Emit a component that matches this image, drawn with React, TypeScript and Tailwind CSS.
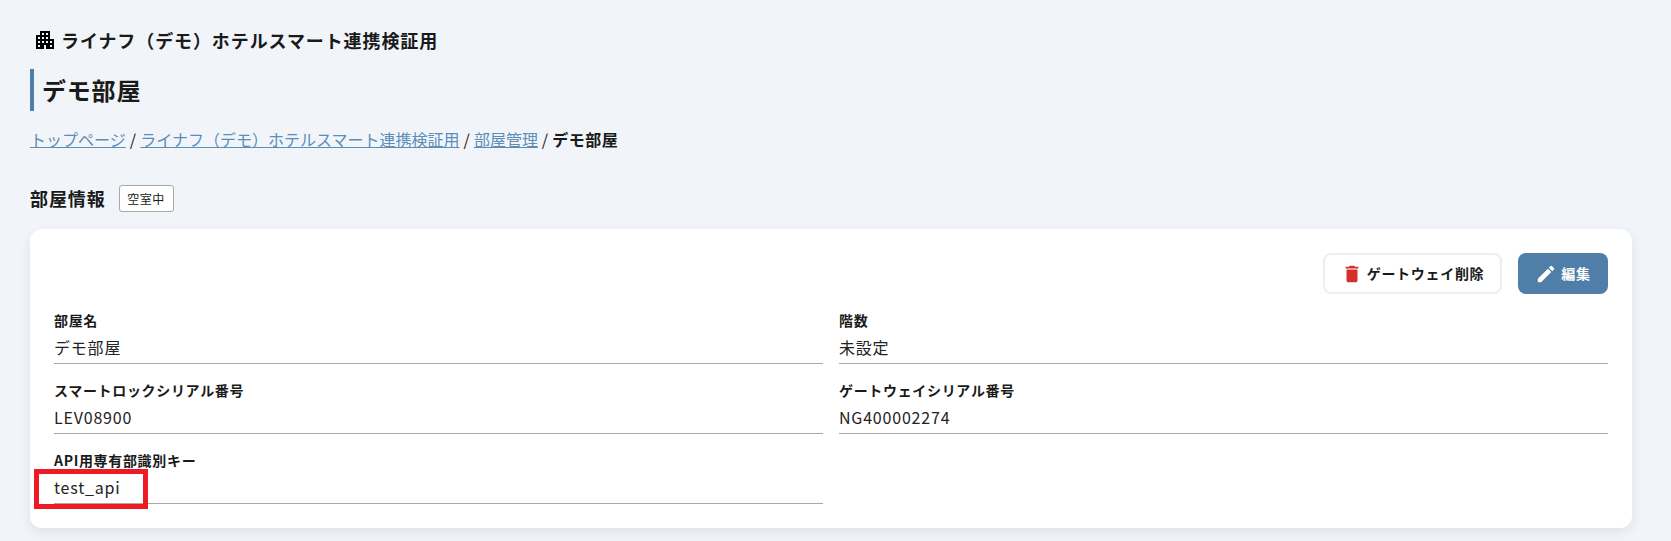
import { MdApartment, MdDelete, MdEdit } from 'react-icons/md';

const fields = [
    { label: '部屋名', value: 'デモ部屋' },
    { label: '階数', value: '未設定' },
    { label: 'スマートロックシリアル番号', value: 'LEV08900' },
    { label: 'ゲートウェイシリアル番号', value: 'NG400002274' },
    { label: 'API用専有部識別キー', value: 'test_api' },
];

export default function App() {
    return (
        <div className="relative min-h-[541px] bg-[#f1f5f9] px-[30px] pt-[28px] text-[#1a1a1a] font-['Noto_Sans_CJK_JP','Noto_Sans',sans-serif] overflow-hidden">
            <div className="flex items-center h-[24px] pl-[3px] gap-[4px] text-[18px] leading-[24px] font-bold tracking-[0.9px]">
                <MdApartment size={24} className="text-black" />
                <span>ライナフ（デモ）ホテルスマート連携検証用</span>
            </div>

            <h1 className="mt-[17px] h-[42px] flex items-center border-l-[4px] border-[#4f7ea8] pl-[8px] text-[24px] font-bold tracking-[0.8px]">
                デモ部屋
            </h1>

            <nav className="mt-[16px] text-[16px] leading-[24px]">
                <a className="text-[#5b8db8] underline">トップページ</a>
                <span className="tracking-[0.4px]"> / </span>
                <a className="text-[#5b8db8] underline">ライナフ（デモ）ホテルスマート連携検証用</a>
                <span className="tracking-[0.3px]"> / </span>
                <a className="text-[#5b8db8] underline">部屋管理</a>
                <span className="tracking-[0.3px]"> / </span>
                <span className="font-bold tracking-[0.5px]">デモ部屋</span>
            </nav>

            <div className="mt-[34px] flex items-center h-[27px] gap-[13px]">
                <h2 className="text-[18px] font-bold tracking-[0.9px]">部屋情報</h2>
                <span className="h-[27px] w-[55px] flex items-center justify-center bg-white border border-[#a8a8a8] rounded-[3px] text-[12px] tracking-[0.5px]">空室中</span>
            </div>

            <div className="mt-[17px] w-[1602px] h-[299px] bg-white rounded-[12px] shadow-[0_4px_12px_rgba(0,0,0,0.08)] px-[24px] pt-[24px]">
                <div className="flex justify-end gap-[16px] h-[41px]">
                    <button className="w-[179px] flex items-center justify-center gap-[4px] bg-white border-2 border-[#eeeeee] rounded-[8px] text-[14px] font-bold tracking-[0.7px]">
                        <MdDelete size={22} className="text-[#d32f2f]" />
                        <span>ゲートウェイ削除</span>
                    </button>
                    <button className="w-[90px] flex items-center justify-center gap-[4px] bg-[#4f7ea8] rounded-[8px] text-white text-[14px] font-bold tracking-[0.7px]">
                        <MdEdit size={22} />
                        <span>編集</span>
                    </button>
                </div>
                <div className="mt-[14px] grid grid-cols-2 gap-x-[16px] gap-y-[14px]">
                    {fields.map((f) => (
                        <div key={f.label} className="h-[56px] border-b border-[#a8a8a8]">
                            <div className="h-[24px] text-[14px] leading-[24px] font-bold tracking-[0.67px]">{f.label}</div>
                            <div className="h-[31px] text-[16px] leading-[30px] tracking-[0.8px] text-[#222222]">{f.value}</div>
                        </div>
                    ))}
                </div>
            </div>

            {/* annotation box */}
            <div className="absolute left-[34px] top-[469px] w-[114px] h-[40px] border-[5px] border-[#ed1c24]"></div>
        </div>
    );
}
